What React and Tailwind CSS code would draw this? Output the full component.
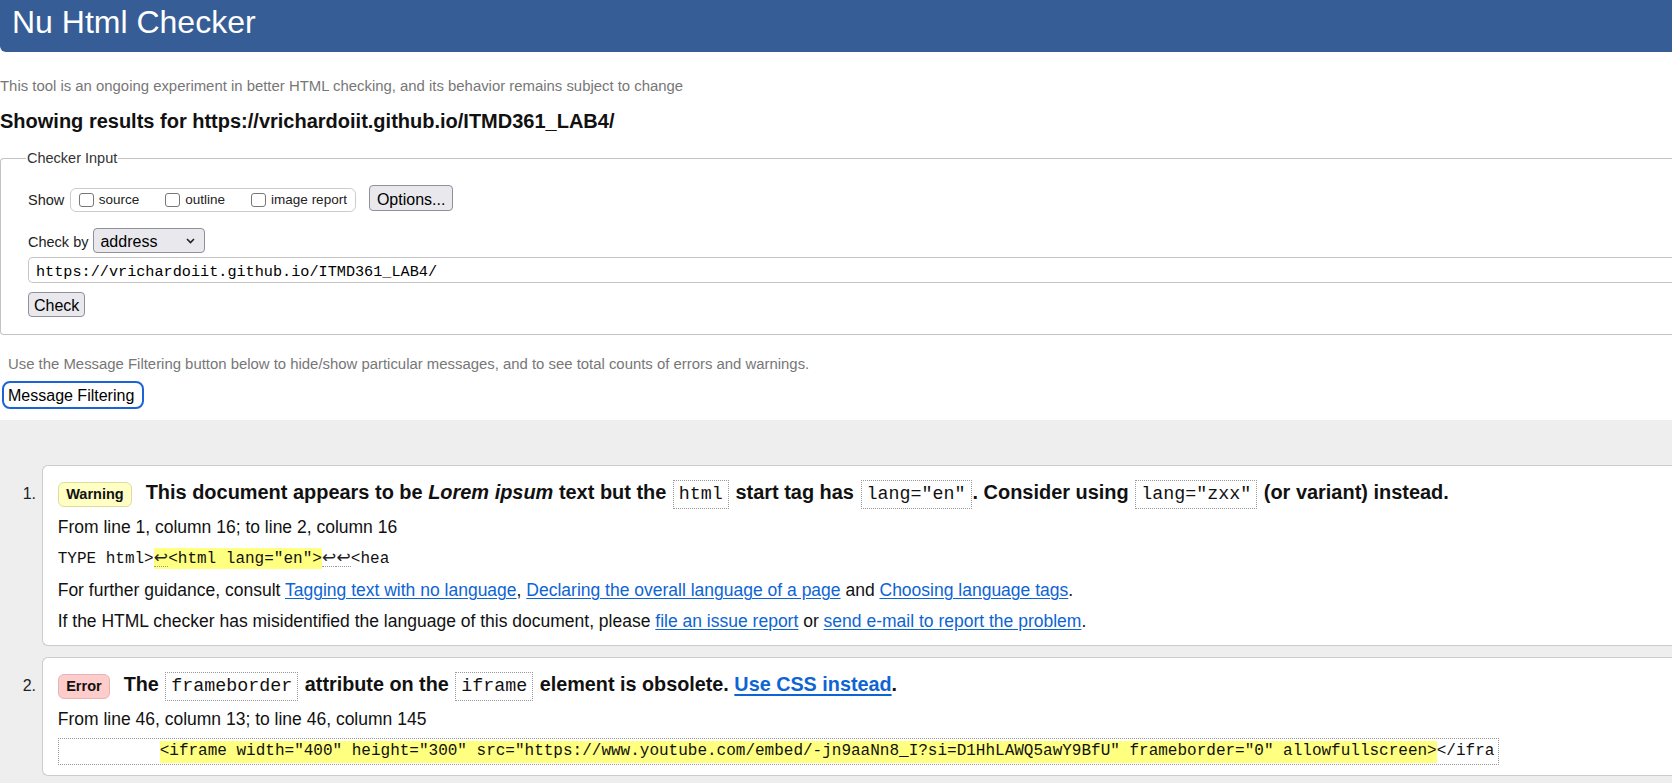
import React from "react";

function Check({ label, className = "" }) {
  return (
    <span className={"flex items-center " + className}>
      <span className="w-[15px] h-[14px] border-[1.5px] border-[#777] rounded-[3px] bg-white" />
      <span className="ml-[5px] text-[13.5px] leading-[16px] text-[#222]">{label}</span>
    </span>
  );
}

function Code({ children }) {
  return (
    <span className="inline-block border border-dotted border-[#999] px-[5px] mx-[1px] font-['Liberation_Mono','DejaVu_Sans_Mono',monospace] text-[18.33px] leading-[27.4px] font-normal">
      {children}
    </span>
  );
}

function Lf() {
  return (
    <span className="inline-block w-[14.5px] text-center border-b border-dotted border-[#999] leading-[18px] font-['DejaVu_Sans',sans-serif] text-[17px] text-[#222]">
      ↩
    </span>
  );
}

function A({ children, bold = false }) {
  return (
    <a
      href="#"
      className={
        bold
          ? "text-[#0d64d4] underline decoration-2 underline-offset-[3px]"
          : "text-[#0d64d4] underline underline-offset-[2px]"
      }
    >
      {children}
    </a>
  );
}

export default function App() {
  return (
    <div className="w-full h-[783px] overflow-hidden bg-white flex flex-col font-['Liberation_Sans',Arial,sans-serif] text-[#111]">
      <h1 className="shrink-0 h-[52px] bg-[#365d95] rounded-bl-[6px] text-white text-[32px] leading-[37px] pt-[4px] pl-[12px] font-normal">
        Nu Html Checker
      </h1>
      <p className="mt-[24px] text-[14.9px] leading-[20px] text-[#777]">
        This tool is an ongoing experiment in better HTML checking, and its behavior remains subject to change
      </p>
      <h2 className="mt-[13px] text-[20px] leading-[24px] font-bold text-[#111]">
        Showing results for https://vrichardoiit.github.io/ITMD361_LAB4/
      </h2>

      <fieldset className="mt-[16.5px] border border-[#c3c3c3] border-r-0 rounded-l-[4px] pl-[27px] pt-[18.5px] pb-[17px]">
        <legend className="ml-[-2px] px-[1px] text-[14.5px] leading-[17px] text-[#333]">Checker Input</legend>

        <div className="flex items-start">
          <span className="mt-[6.5px] text-[14.5px] leading-[17px] text-[#222]">Show</span>
          <div className="ml-[5.5px] mt-[3px] h-[24px] flex items-center border border-[#ccc] rounded-[6px] pl-[8px] pr-[8px]">
            <Check label="source" />
            <Check label="outline" className="ml-[26px]" />
            <Check label="image report" className="ml-[26px]" />
          </div>
          <button className="ml-[13px] h-[26px] px-[7px] pt-[2px] text-[16px] leading-[24px] border border-[#8f8f9d] bg-[#e9e9ed] rounded-[4px] text-black">
            Options...
          </button>
        </div>

        <div className="mt-[16.3px] flex items-start">
          <span className="mt-[5.9px] text-[14.5px] leading-[17px] text-[#222]">Check by</span>
          <div className="ml-[5px] w-[112px] h-[25px] flex items-start justify-between border border-[#8f8f9d] rounded-[4px] bg-[#e9e9ed] pl-[6px] pr-[9px]">
            <span className="pt-[1px] text-[16px] leading-[23px] text-black">address</span>
            <svg width="9" height="6" viewBox="0 0 9 6" className="self-center mt-[1px]">
              <path d="M1 1 L4.5 4.5 L8 1" fill="none" stroke="#222" strokeWidth="1.6" />
            </svg>
          </div>
        </div>

        <div className="mt-[4px] h-[26px] border border-[#c6c6c6] border-r-0 rounded-l-[5px] pl-[7px] pt-[2px] font-['Liberation_Mono','DejaVu_Sans_Mono',monospace] text-[15.2px] leading-[24px] text-black whitespace-nowrap">
          https://vrichardoiit.github.io/ITMD361_LAB4/
        </div>

        <button className="mt-[9px] block h-[25px] px-[5px] pt-[1px] text-[16px] leading-[24px] border border-[#8f8f9d] bg-[#e9e9ed] rounded-[4px] text-black">
          Check
        </button>
      </fieldset>

      <p className="mt-[19px] pl-[8px] text-[14.9px] leading-[20px] text-[#777]">
        Use the Message Filtering button below to hide/show particular messages, and to see total counts of errors and warnings.
      </p>
      <div>
        <button className="mt-[7px] ml-[2px] h-[28px] pl-[4px] pr-[8px] pt-[1px] border-2 border-[#1b64d6] rounded-[8px] text-[16px] leading-[24px] bg-white text-black">
          Message Filtering
        </button>
      </div>

      <div className="mt-[10.5px] flex-1 bg-[#eee] pt-[45px]">
        <ol>
          <li className="flex items-baseline">
            <span className="w-[41.7px] shrink-0 text-right pr-[5.7px] text-[16px] text-[#222]">1.</span>
            <div className="flex-1 bg-white border border-[#ccc] border-r-0 rounded-l-[6px] pl-[15px] pt-[9px] pb-[12.2px]">
              <p className="text-[19.95px] leading-[34px] font-bold whitespace-nowrap">
                <span className="inline-block mr-[13.5px] border border-[#dede9c] bg-[#ffffc4] rounded-[6px] px-[7.5px] text-[14.5px] leading-[23px] font-bold">
                  Warning
                </span>
                This document appears to be <em>Lorem ipsum</em> text but the <Code>html</Code> start tag has{" "}
                <Code>lang="en"</Code>. Consider using <Code>lang="zxx"</Code> (or variant) instead.
              </p>
              <p className="mt-[5.8px] text-[17.5px] leading-[24px]">From line 1, column 16; to line 2, column 16</p>
              <p className="mt-[8.2px] font-['Liberation_Mono','DejaVu_Sans_Mono',monospace] text-[16px] leading-[24px] whitespace-pre">
                {"TYPE html>"}
                <span className="inline-block bg-[#ffff80] leading-[19px]">
                  <Lf />
                  {'<html lang="en">'}
                </span>
                <Lf />
                <Lf />
                {"<hea"}
              </p>
              <p className="mt-[7.1px] text-[17.5px] leading-[24px]">
                For further guidance, consult <A>Tagging text with no language</A>,{" "}
                <A>Declaring the overall language of a page</A> and <A>Choosing language tags</A>.
              </p>
              <p className="mt-[6.7px] text-[17.5px] leading-[24px]">
                If the HTML checker has misidentified the language of this document, please{" "}
                <A>file an issue report</A> or <A>send e-mail to report the problem</A>.
              </p>
            </div>
          </li>

          <li className="mt-[11.3px] flex items-baseline">
            <span className="w-[41.7px] shrink-0 text-right pr-[5.7px] text-[16px] text-[#222]">2.</span>
            <div className="flex-1 bg-white border border-[#ccc] border-r-0 rounded-l-[6px] pl-[15px] pt-[8.5px] pb-[10px]">
              <p className="text-[19.8px] leading-[34px] font-bold whitespace-nowrap">
                <span className="inline-block mr-[13.5px] border border-[#e6b4b4] bg-[#ffcccc] rounded-[6px] px-[7.5px] text-[14.5px] leading-[22.6px] font-bold">
                  Error
                </span>
                The <Code>frameborder</Code> attribute on the <Code>iframe</Code> element is obsolete.{" "}
                <A bold>Use CSS instead</A>.
              </p>
              <p className="mt-[5.3px] text-[17.5px] leading-[24px]">From line 46, column 13; to line 46, column 145</p>
              <div className="mt-[7.3px] w-fit border border-dotted border-[#999] pl-[5px] pr-[4px] font-['Liberation_Mono','DejaVu_Sans_Mono',monospace] text-[16px] leading-[24.7px] whitespace-pre">
                {"          "}
                <span className="inline-block bg-[#ffff80] leading-[21.7px]">
                  {'<iframe width="400" height="300" src="https://www.youtube.com/embed/-jn9aaNn8_I?si=D1HhLAWQ5awY9BfU" frameborder="0" allowfullscreen>'}
                </span>
                {"</ifra"}
              </div>
            </div>
          </li>
        </ol>
      </div>
    </div>
  );
}
